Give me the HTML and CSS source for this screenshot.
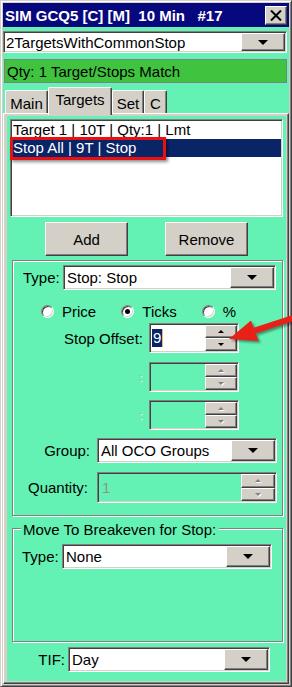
FILE: index.html
```html
<!DOCTYPE html>
<html lang="en">
<head>
    <meta charset="UTF-8">
    <meta name="viewport" content="width=device-width, initial-scale=1.0">
    <title>ATM Strategy</title>
    <link rel="stylesheet" href="styles.css">
</head>
<body>
<div class="window">
    <div class="titlebar">
        <span class="title">SIM GCQ5 [C] [M]  10 Min   #17</span>
        <span class="close-btn">
            <svg width="12" height="11" viewBox="0 0 12 11"><path d="M1 0.5 L11 10.5 M11 0.5 L1 10.5" stroke="#000" stroke-width="2"/></svg>
        </span>
    </div>
    <div class="client">
        <div class="combo combo-template">
            <span class="combo-text">2TargetsWithCommonStop</span>
            <span class="combo-btn"><span class="tri-down"></span></span>
        </div>
        <div class="status">Qty: 1 Target/Stops Match</div>
        <div class="tabs">
            <span class="tab tab-main">Main</span>
            <span class="tab tab-targets active">Targets</span>
            <span class="tab tab-set">Set</span>
            <span class="tab tab-c">C</span>
        </div>
        <div class="panel">
            <div class="panel-inner">
                <div class="listbox">
                    <div class="item">Target 1 | 10T | Qty:1 | Lmt</div>
                    <div class="item selected">Stop All | 9T | Stop</div>
                </div>
                <div class="btn-row">
                    <span class="btn">Add</span>
                    <span class="btn">Remove</span>
                </div>

                <div class="group group-stop">
                    <div class="row type-row">
                        <span class="label-left">Type:</span>
                        <div class="combo combo-type">
                            <span class="combo-text">Stop: Stop</span>
                            <span class="combo-btn"><span class="tri-down"></span></span>
                        </div>
                    </div>
                    <div class="radio-row">
                        <span class="radio-opt"><span class="radio"></span>Price</span>
                        <span class="radio-opt"><span class="radio checked"></span>Ticks</span>
                        <span class="radio-opt"><span class="radio"></span>%</span>
                    </div>
                    <div class="row spin-row offset-row">
                        <span class="label-right">Stop Offset:</span>
                        <div class="spin">
                            <span class="spin-field"><span class="sel-text">9</span></span>
                            <span class="spin-btns">
                                <span class="spin-btn"><span class="tri-up-sm"></span></span>
                                <span class="spin-btn"><span class="tri-down-sm"></span></span>
                            </span>
                        </div>
                    </div>
                    <div class="row spin-row extra-row-1">
                        <span class="label-right colon">:</span>
                        <div class="spin disabled">
                            <span class="spin-field"></span>
                            <span class="spin-btns">
                                <span class="spin-btn"><span class="tri-up-sm"></span></span>
                                <span class="spin-btn"><span class="tri-down-sm"></span></span>
                            </span>
                        </div>
                    </div>
                    <div class="row spin-row extra-row-2">
                        <span class="label-right colon">:</span>
                        <div class="spin disabled">
                            <span class="spin-field"></span>
                            <span class="spin-btns">
                                <span class="spin-btn"><span class="tri-up-sm"></span></span>
                                <span class="spin-btn"><span class="tri-down-sm"></span></span>
                            </span>
                        </div>
                    </div>
                    <div class="row group-row">
                        <span class="label-right">Group:</span>
                        <div class="combo combo-group">
                            <span class="combo-text">All OCO Groups</span>
                            <span class="combo-btn"><span class="tri-down"></span></span>
                        </div>
                    </div>
                    <div class="row qty-row">
                        <span class="label-right">Quantity:</span>
                        <div class="spin disabled spin-qty">
                            <span class="spin-field">1</span>
                            <span class="spin-btns">
                                <span class="spin-btn"><span class="tri-up-sm"></span></span>
                                <span class="spin-btn"><span class="tri-down-sm"></span></span>
                            </span>
                        </div>
                    </div>
                </div>

                <div class="group group-be">
                    <span class="legend">Move To Breakeven for Stop:</span>
                    <div class="row be-row">
                        <span class="label-left">Type:</span>
                        <div class="combo combo-be">
                            <span class="combo-text">None</span>
                            <span class="combo-btn"><span class="tri-down"></span></span>
                        </div>
                    </div>
                </div>

                <div class="row tif-row">
                    <span class="label-right">TIF:</span>
                    <div class="combo combo-tif">
                        <span class="combo-text">Day</span>
                        <span class="combo-btn"><span class="tri-down"></span></span>
                    </div>
                </div>
            </div>
        </div>
    </div>

    <!-- annotation overlays -->
    <div class="mark"></div>
    <svg class="arrow" width="292" height="687" viewBox="0 0 292 687">
        <polygon points="255.6,333.6 253.6,327.8 292.2,315.1 294.0,320.9" fill="#e82018"/>
        <polygon points="229,339 251.0,320.6 258.5,341.0" fill="#e82018"/>
    </svg>
</div>
</body>
</html>
```

FILE: styles.css
```css
* {
    box-sizing: border-box;
}
body {
    margin: 0;
    font-family: "Liberation Sans", Arial, sans-serif;
    font-size: 15px;
    color: #000;
    background: #d4d0c8;
}

/* window frame */
.window {
    position: relative;
    width: 292px;
    height: 687px;
    display: flex;
    flex-direction: column;
    padding: 2px;
    background: #d4d0c8;
    border: 1px solid;
    border-color: #d4d0c8 #404040 #404040 #d4d0c8;
    box-shadow: inset 1px 1px #fff, inset -1px -1px #808080;
}
.titlebar {
    height: 24px;
    flex: none;
    display: flex;
    align-items: center;
    justify-content: space-between;
    padding: 0 2px;
    background: #08087e;
    color: #fff;
    font-weight: bold;
    white-space: pre;
}
.close-btn {
    width: 22px;
    height: 19px;
    display: flex;
    align-items: center;
    justify-content: center;
    background: #d4d0c8;
    border: 1px solid;
    border-color: #fff #404040 #404040 #fff;
    box-shadow: inset -1px -1px #808080;
}
.client {
    flex: 1;
    display: flex;
    flex-direction: column;
    background: #64f2b4;
}

/* shared controls */
.combo, .spin, .listbox {
    display: flex;
    background: #fff;
    border: 1px solid;
    border-color: #808080 #fff #fff #808080;
    box-shadow: inset 1px 1px #404040, inset -1px -1px #d4d0c8;
    padding: 1px;
}
.combo-text {
    flex: 1;
    display: flex;
    align-items: center;
    padding-left: 2px;
    white-space: nowrap;
    overflow: hidden;
}
.combo-btn, .btn, .spin-btn {
    display: flex;
    align-items: center;
    justify-content: center;
    background: #d4d0c8;
    border: 1px solid;
    border-color: #fff #404040 #404040 #fff;
    box-shadow: inset -1px -1px #808080;
}
.combo-btn {
    width: 44px;
}
.tri-down {
    width: 0;
    height: 0;
    border-left: 5px solid transparent;
    border-right: 5px solid transparent;
    border-top: 5px solid #000;
}
.tri-up-sm, .tri-down-sm {
    width: 0;
    height: 0;
    border-left: 3px solid transparent;
    border-right: 3px solid transparent;
}
.tri-up-sm {
    border-bottom: 3px solid #000;
}
.tri-down-sm {
    border-top: 3px solid #000;
}
.disabled .tri-up-sm {
    border-bottom-color: #808080;
    filter: drop-shadow(1px 1px 0 #fff);
}
.disabled .tri-down-sm {
    border-top-color: #808080;
    filter: drop-shadow(1px 1px 0 #fff);
}

/* top area */
.combo-template {
    margin: 4px 2px 0 0;
    height: 22px;
}
.combo-template .combo-text {
    padding-left: 1px;
}
.status {
    margin: 6px 2px 0 1px;
    height: 24px;
    display: flex;
    align-items: center;
    padding-left: 2px;
    background: #40c440;
    border: 1px solid #808080;
}
.tabs {
    height: 26px;
    flex: none;
    margin-top: 4px;
    padding-left: 2px;
    display: flex;
    align-items: flex-end;
}
.tab {
    height: 23px;
    display: flex;
    align-items: center;
    justify-content: center;
    background: #d4d0c8;
    border: 1px solid;
    border-color: #fff #404040 transparent #fff;
    border-bottom: none;
    box-shadow: inset -1px 0 #808080;
    border-radius: 2px 2px 0 0;
}
.tab-main { width: 43px; padding-top: 2px; }
.tab-targets { width: 64px; }
.tab-set { width: 32px; padding-top: 2px; }
.tab-c { width: 23px; padding-top: 2px; }
.tab.active {
    position: relative;
    z-index: 1;
    height: 28px;
    margin-bottom: -2px;
    padding-bottom: 4px;
}

/* tab page */
.panel {
    flex: 1;
    padding: 2px 2px 2px 3px;
    background: #d4d0c8;
    border: 1px solid;
    border-color: #fff #404040 #404040 #fff;
    box-shadow: inset -1px -1px #808080;
}
.panel-inner {
    height: 100%;
    display: flex;
    flex-direction: column;
    background: #64f2b4;
}
.listbox {
    flex-direction: column;
    margin: 3px 3px 0 3px;
    height: 98px;
    flex: none;
}
.item {
    height: 18px;
    line-height: 18px;
    padding-left: 1px;
    white-space: nowrap;
}
.item.selected {
    background: #0a2468;
    color: #fff;
}
.btn-row {
    display: flex;
    gap: 37px;
    padding-left: 38px;
    margin-top: 5px;
}
.btn {
    width: 83px;
    height: 34px;
}

/* group boxes */
.group {
    position: relative;
    flex: none;
    margin: 4px 3px 0 5px;
    border: 1px solid #808080;
    box-shadow: inset 1px 1px #fff, 1px 1px #fff;
}
.group-stop {
    height: 256px;
}
.group-be {
    margin-top: 12px;
    height: 114px;
}
.legend {
    position: absolute;
    top: -8px;
    left: 8px;
    padding: 0 3px 0 2px;
    line-height: 17px;
    background: #64f2b4;
}
.row {
    display: flex;
    align-items: center;
}
.label-left {
    width: 40px;
}
.label-right {
    text-align: right;
    white-space: nowrap;
}
.type-row {
    margin-top: 4px;
    padding-left: 10px;
    height: 25px;
}
.combo-type {
    width: 213px;
    height: 25px;
}
.radio-row {
    margin-top: 11px;
    height: 20px;
    padding-left: 28px;
    display: flex;
}
.radio-opt {
    width: 85px;
    display: flex;
    align-items: center;
    gap: 8px;
}
.radio {
    position: relative;
    width: 13px;
    height: 13px;
    border-radius: 50%;
    background: #fff;
    border: 1px solid;
    border-color: #808080 #fff #fff #808080;
    box-shadow: inset 1px 1px #404040, inset -1px -1px #d4d0c8;
}
.radio.checked::after {
    content: "";
    position: absolute;
    left: 3px;
    top: 3px;
    width: 5px;
    height: 5px;
    border-radius: 50%;
    background: #000;
}
.spin-row {
    height: 30px;
}
.spin-row .label-right {
    width: 136px;
    padding-right: 6px;
}
.spin-row .spin {
    width: 90px;
    height: 30px;
}
.offset-row {
    margin-top: 2px;
}
.extra-row-1 {
    margin-top: 9px;
}
.extra-row-2 {
    margin-top: 8px;
}
.colon {
    color: #a8a8a8;
    font-size: 11px;
    text-shadow: 1px 1px #fff;
}
.spin-row .label-right.colon {
    padding-right: 7px;
}
.spin-field {
    flex: 1;
    display: flex;
    align-items: center;
    padding-left: 1px;
}
.sel-text {
    background: #0a2468;
    color: #fff;
    padding: 0 1px;
    border-right: 1px solid #e0c070;
    line-height: 18px;
}
.spin-btns {
    width: 32px;
    display: flex;
    flex-direction: column;
}
.spin-btn {
    flex: 1;
}
.spin.disabled {
    background: #64f2b4;
}
.group-row {
    margin-top: 8px;
    height: 25px;
}
.group-row .label-right, .qty-row .label-right {
    width: 84px;
    padding-right: 7px;
}
.qty-row .label-right {
    padding-right: 9px;
}
.combo-group {
    width: 180px;
    height: 25px;
}
.qty-row {
    margin-top: 9px;
    height: 31px;
}
.spin-qty {
    width: 180px;
    height: 31px;
}
.spin-qty .spin-field {
    color: #909090;
    padding-left: 3px;
}
.spin-qty .spin-btns {
    width: 34px;
}
.be-row {
    margin-top: 15px;
    padding-left: 9px;
    height: 25px;
}
.combo-be {
    width: 210px;
    height: 25px;
}
.tif-row {
    margin-top: 5px;
    height: 25px;
}
.tif-row .label-right {
    width: 61px;
    padding-right: 3px;
}
.combo-tif {
    width: 202px;
    height: 25px;
}

/* red annotations drawn over the screenshot */
.mark {
    position: absolute;
    left: 9px;
    top: 136px;
    width: 156px;
    height: 23px;
    border: 3px solid #e81010;
    box-shadow: 2px 2px 3px rgba(0, 0, 0, 0.45);
}
.arrow {
    position: absolute;
    left: -1px;
    top: -1px;
    pointer-events: none;
    filter: drop-shadow(2px 2px 1px rgba(0, 0, 0, 0.4));
}
```
